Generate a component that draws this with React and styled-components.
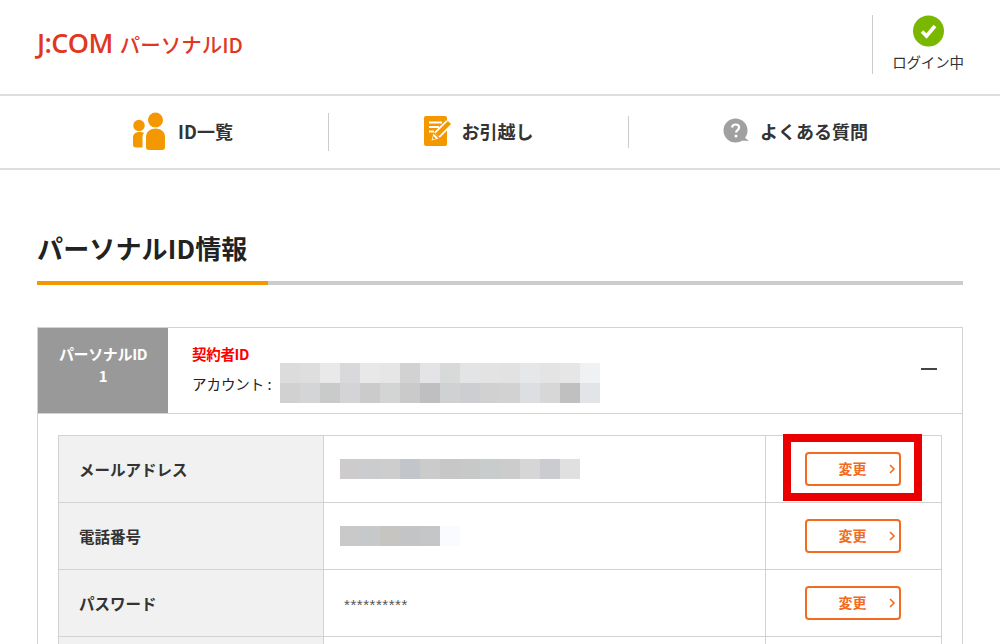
import React from "react";
import styled, { createGlobalStyle } from "styled-components";

const Global = createGlobalStyle`
  html, body { margin: 0; padding: 0; background: #fff; overflow: hidden; }
  body { font-family: "Noto Sans CJK JP", "Noto Sans", sans-serif; color: #222; }
`;
const Page = styled.div`width: 1000px; height: 644px; overflow: hidden;`;
const Header = styled.header`
  height: 94px; border-bottom: 2px solid #ddd; display: flex; align-items: flex-start;
  justify-content: space-between; padding-left: 37px; padding-right: 17px;
`;
const Logo = styled.div`
  margin-top: 27px; display: flex; align-items: baseline; color: #e0371f; line-height: 32px; font-size: 20.5px; font-weight: 500; white-space: nowrap;
`;
const LogoBrand = styled.span`
  font-family: "Open Sans", sans-serif; font-weight: 600; font-size: 27px; margin-right: 7px; letter-spacing: -.6px;
`;
const LoginBox = styled.div`
  margin-top: 15px; width: 110px; height: 59px; border-left: 1px solid #ccc; display: flex; flex-direction: column; align-items: center;
  font-size: 14.500px; color: #333;
`;
const LoginLabel = styled.span`margin-top: 5px; line-height: 20px; letter-spacing: -.2px;`;
const Nav = styled.nav`
  height: 72px; border-bottom: 2px solid #ddd; display: grid; grid-template-columns: 329px 300px 1fr; align-items: center;
`;
const NavItem = styled.div`
  height: 72px; display: flex; align-items: center; justify-content: center; gap: ${p => p.$gap}px;
  padding-left: ${p => p.$left || 0}px; padding-right: ${p => p.$right || 0}px; padding-bottom: 2px; box-sizing: border-box;
  position: relative; font-size: 18px; font-weight: 700; color: #333;
  &::after {
    content: ""; display: ${p => (p.$rule ? "block" : "none")}; position: absolute; right: 0; top: calc(50% - ${p => p.$rule / 2}px);
    width: 1px; height: ${p => p.$rule}px; background: #ccc;
  }
`;
const Main = styled.main`padding: 60px 37px 0;`;
const Title = styled.h1`
  margin: 0; font-size: 26px; line-height: 36px; font-weight: 700; color: #222; height: 51px; letter-spacing: .15px;
  border-bottom: 4px solid #ccc; position: relative;
  &::after { content: ""; position: absolute; left: 0; bottom: -4px; width: 231px; height: 4px; background: #f39800; }
`;
const Card = styled.section`
  margin-top: 42px; border: 1px solid #d2d2d2; padding-bottom: 60px;
`;
const CardHead = styled.div`
  height: 85px; display: flex; border-bottom: 1px solid #d2d2d2; position: relative;
`;
const IdCell = styled.div`
  width: 130px; background: #999; color: #fff; font-size: 15px; font-weight: 700; line-height: 22px;
  text-align: center; padding-top: 15px; box-sizing: border-box; letter-spacing: -.35px;
`;
const AccountCol = styled.div`
  padding: 15px 0 0 24px; font-size: 14px; line-height: 22px; display: flex; flex-direction: column;
`;
const Contract = styled.div`color: #f00; font-weight: 700; font-size: 14.500px; letter-spacing: -.3px;`;
const AccountRow = styled.div`display: flex; align-items: flex-start; margin-top: 8px;`;
const AccountLabel = styled.span`width: 88px; flex: none; white-space: pre; font-size: 14.500px; letter-spacing: -.05px;`;
const Mosaic = styled.div`
  display: grid; grid-template-columns: repeat(${p => p.$cols}, 20px); grid-auto-rows: 20px;
`;
const MosaicOver = styled(Mosaic)`margin-top: -10px;`;
const Tile = styled.i`display: block; background: ${p => p.$c};`;
const Minus = styled.span`
  position: absolute; right: 25px; top: 40px; width: 16px; height: 2px; background: #444;
`;
const Body = styled.div`padding: 21px 20px 0; position: relative;`;
const Table = styled.div`border: 1px solid #d2d2d2; border-bottom: none;`;
const Row = styled.div`
  display: grid; grid-template-columns: 265px 442px 1fr; height: 66px; border-bottom: 1px solid #d2d2d2;
`;
const LabelCell = styled.div`
  background: #f1f1f1; border-right: 1px solid #d2d2d2; display: flex; align-items: center; padding-left: 20px; padding-bottom: 1px;
  font-size: 15.500px; font-weight: 700; color: #333;
`;
const ValueCell = styled.div`
  display: flex; align-items: center; padding-left: 16px; font-size: 14px; color: #555; border-right: 1px solid #d2d2d2;
`;
const Stars = styled.span`padding: 3px 0 0 4px; font-family: "Liberation Sans", sans-serif; font-size: 15px; letter-spacing: .55px;`;
const ActionCell = styled.div`display: flex; align-items: center; justify-content: center; padding-right: 2px; padding-bottom: 1px;`;
const ChangeButton = styled.button`
  width: 96px; height: 34px; border: 2px solid #f26b21; border-radius: 4px; background: #fff; color: #f26b21;
  font: 700 14px "Noto Sans CJK JP", sans-serif; position: relative; padding: 0 0 1px; box-sizing: border-box;
  svg { position: absolute; right: 3px; top: 10px; }
`;
const Highlight = styled.div`
  position: absolute; left: 745px; top: 20px; width: 139px; height: 67px; box-sizing: border-box; border: 8px solid #ea0000;
  pointer-events: none;
`;

const row1 = ["#dcdcdc","#dedede","#e9e9e9","#d9d9db","#e8e8e8","#e6e6e6","#d2d2d2","#e4e4e6","#d8d9d9","#e3e4e6","#e3e3e3","#e2e2e2","#e6e7e9","#e4e4e4","#e6e6e7","#f0f1f2",
 "#d1d1d1","#d4d5d7","#c9cbca","#d4d4d6","#cbcbcb","#d3d4d4","#cacaca","#bfbfc2","#d0d1d3","#cdced1","#d1d1d1","#d2d2d2","#dddee1","#d7d7d7","#c1c0c0","#e3e4e7"];
const row2 = ["#cdcbcb","#cbcccd","#cdcdcd","#c2c5c9","#cbcbcb","#c8c7c7","#c7c9c8","#c8cccc","#cccccc","#d6d6d6","#cbccd0","#e0e0e0"];
const row3 = ["#c9c9c9","#c7c8ca","#c6c5c2","#c2c4c6","#c5c6c7","#fafbfe"];

const PeopleIcon = () => (
  <svg width="34" height="38" viewBox="0 0 34 38" fill="#f39800">
    <circle cx="23.500" cy="8" r="7.500" />
    <circle cx="7" cy="13.500" r="5.700" />
    <path d="M14 25c0-5 4-8.500 9.500-8.500S33 20 33 25v10c0 2-1 3-3 3H17c-2 0-3-1-3-3z" />
    <path d="M12 21c-1.500 1-1.500 3-1.500 5v7.500c0 .7 0 1.500.2 2H4c-2 0-3-1-3-3V26c0-4 2.500-6 6.500-6 2 0 3.500.3 4.500 1z" />
  </svg>
);
const NoteIcon = () => (
  <svg width="30" height="32" viewBox="0 0 30 32">
    <rect x="1" y="1" width="23" height="30" rx="2" fill="#f39800" />
    <path d="M6 7.500h13M6 12h10M6 16.500h5" stroke="#fff" strokeWidth="1.800" />
    <path d="M14 20L26 8" stroke="#fff" strokeWidth="8" />
    <path d="M14 20L26.500 7.500" stroke="#f39800" strokeWidth="4.500" />
    <path d="M8.500 25.500l2-7 5 5z" fill="#fff" />
    <path d="M9.500 24.500l1-3.500 2.500 2.500z" fill="#f39800" />
  </svg>
);
const HelpIcon = () => (
  <svg width="27" height="26" viewBox="0 0 27 26">
    <circle cx="12.500" cy="12.500" r="12" fill="#a0a0a0" />
    <path d="M21 19l5 4-8-.500z" fill="#a0a0a0" />
    <path d="M9 9.500c.3-2 1.700-3 3.600-3 2.100 0 3.500 1.200 3.500 3 0 2.600-3 2.600-3 5" fill="none" stroke="#fff" strokeWidth="2.200" />
    <circle cx="13" cy="18" r="1.500" fill="#fff" />
  </svg>
);
const CheckIcon = () => (
  <svg width="31" height="32" viewBox="0 0 31 32">
    <circle cx="15.500" cy="16" r="15.500" fill="#7ab800" />
    <path d="M9 16.500l4.500 4.500 8.500-10" fill="none" stroke="#fff" strokeWidth="3.600" />
  </svg>
);
const Chevron = () => (
  <svg width="8" height="10" viewBox="0 0 8 10"><path d="M2 1l4 4-4 4" fill="none" stroke="#f26b21" strokeWidth="1.600" /></svg>
);
const Change = () => (
  <ChangeButton>変更<Chevron /></ChangeButton>
);

export default function App() {
  return (
    <Page>
      <Global />
      <Header>
        <Logo><LogoBrand>J:COM</LogoBrand>パーソナルID</Logo>
        <LoginBox><CheckIcon /><LoginLabel>ログイン中</LoginLabel></LoginBox>
      </Header>
      <Nav>
        <NavItem $rule={38} $gap={12} $left={36}><PeopleIcon />ID一覧</NavItem>
        <NavItem $rule={32} $gap={9} $right={2}><NoteIcon />お引越し</NavItem>
        <NavItem $gap={10} $right={38}><HelpIcon />よくある質問</NavItem>
      </Nav>
      <Main>
        <Title>パーソナルID情報</Title>
        <Card>
          <CardHead>
            <IdCell>パーソナルID<br />1</IdCell>
            <AccountCol>
              <Contract>契約者ID</Contract>
              <AccountRow>
                <AccountLabel>アカウント : </AccountLabel>
                <MosaicOver $cols={16}>{row1.map((c, i) => <Tile key={i} $c={c} />)}</MosaicOver>
              </AccountRow>
            </AccountCol>
            <Minus />
          </CardHead>
          <Body>
            <Table>
              <Row>
                <LabelCell>メールアドレス</LabelCell>
                <ValueCell><Mosaic $cols={12}>{row2.map((c, i) => <Tile key={i} $c={c} />)}</Mosaic></ValueCell>
                <ActionCell><Change /></ActionCell>
              </Row>
              <Row>
                <LabelCell>電話番号</LabelCell>
                <ValueCell><Mosaic $cols={6}>{row3.map((c, i) => <Tile key={i} $c={c} />)}</Mosaic></ValueCell>
                <ActionCell><Change /></ActionCell>
              </Row>
              <Row>
                <LabelCell>パスワード</LabelCell>
                <ValueCell><Stars>**********</Stars></ValueCell>
                <ActionCell><Change /></ActionCell>
              </Row>
              <Row><LabelCell /><ValueCell /><ActionCell /></Row>
            </Table>
            <Highlight />
          </Body>
        </Card>
      </Main>
    </Page>
  );
}
